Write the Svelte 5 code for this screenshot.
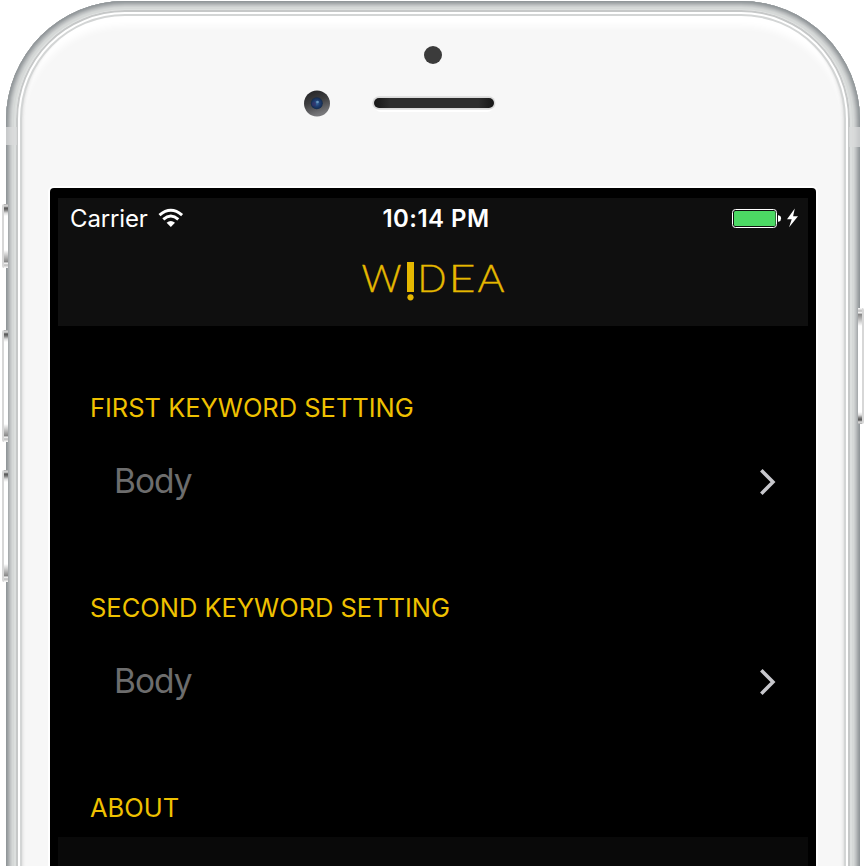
<script>
  const sections = [
    { title: 'FIRST KEYWORD SETTING', value: 'Body' },
    { title: 'SECOND KEYWORD SETTING', value: 'Body' }
  ];
  const buttons = ['mute', 'up', 'down', 'power'];
</script>

<div class="stage">
  {#each buttons as name}
    <span class="button {name}"></span>
  {/each}
  <div class="phone">
    <span class="band left"></span>
    <span class="band right"></span>
    <div class="face">
      <div class="sensors">
        <svg width="220" height="90" viewBox="290 40 220 90">
          <defs>
            <linearGradient id="ring" x1="0" y1="0" x2=".35" y2="1">
              <stop offset="0" stop-color="#202022" />
              <stop offset=".5" stop-color="#3d3d3f" />
              <stop offset="1" stop-color="#77777a" />
            </linearGradient>
            <radialGradient id="lens">
              <stop offset="0" stop-color="#376b9e" />
              <stop offset=".5" stop-color="#203f74" />
              <stop offset="1" stop-color="#142a4a" />
            </radialGradient>
            <linearGradient id="slot">
              <stop offset="0" stop-color="#171717" />
              <stop offset=".13" stop-color="#2d2d2d" />
              <stop offset=".87" stop-color="#2d2d2d" />
              <stop offset="1" stop-color="#171717" />
            </linearGradient>
          </defs>
          <circle cx="433" cy="55" r="9" fill="#3b3b3b" />
          <circle cx="317" cy="103.5" r="13" fill="url(#ring)" />
          <circle cx="316.8" cy="103.3" r="6" fill="url(#lens)" />
          <circle cx="314" cy="104" r="2.2" fill="#36336b" opacity=".7" />
          <circle cx="317.5" cy="102" r="1.3" fill="#6996bd" />
          <rect x="374" y="98" width="120" height="14" rx="7" fill="#fff" />
          <rect x="372.3" y="96.2" width="123.200" height="13.600" rx="6.800" fill="#dadada" />
          <rect x="374" y="98" width="120" height="10" rx="5" fill="url(#slot)" />
        </svg>
      </div>
      <div class="screen">
        <header>
          <div class="status">
            <div class="carrier">
              <span>Carrier</span>
              <svg width="26" height="20" viewBox="0 0 26 20" fill="none" stroke="#fff" stroke-width="3">
                <path d="M1.500 7.200 Q12.800-2.600 24.100 7.200" />
                <path d="M5.300 11.300 Q12.800 4.700 20.300 11.300" />
                <path d="M8.600 14.800 Q12.800 11 17 14.800 L12.800 19Z" fill="#fff" stroke="none" />
              </svg>
            </div>
            <span class="time">10:14 PM</span>
            <svg class="power-icons" width="68" height="22" viewBox="732 207 68 22">
              <rect x="732.500" y="209.500" width="44" height="18" rx="3" fill="none" stroke="#fff" />
              <rect x="734" y="211" width="41.500" height="15" rx="1.500" fill="#4cd964" />
              <path d="M778 215.200h.5q2.600.5 2.600 3.300t-2.600 3.300h-.5z" fill="#fff" />
              <path d="M794.800 208.500 L787 219.200 H791.700 L789.100 227.300 L798 216.300 H793.100Z" fill="#fff" />
            </svg>
          </div>
          <svg class="logo" width="166" height="62" viewBox="350 250 166 62">
            <g font-family="Lato, sans-serif" font-weight="300" font-size="37.500" fill="#e5b800" stroke="#e5b800" stroke-width=".35">
              <text x="361.500" y="292" textLength="40" lengthAdjust="spacingAndGlyphs">W</text>
              <text x="417.500" y="292" textLength="29" lengthAdjust="spacingAndGlyphs">D</text>
              <text x="448.500" y="292" textLength="27" lengthAdjust="spacingAndGlyphs">E</text>
              <text x="477.500" y="292" textLength="27" lengthAdjust="spacingAndGlyphs">A</text>
            </g>
            <rect x="407" y="262" width="7" height="30" fill="#e5b800" />
            <circle cx="410.500" cy="297.300" r="3.100" fill="#e5b800" />
          </svg>
        </header>
        <main>
          {#each sections as section}
            <section>
              <h2>{section.title}</h2>
              <div class="row">
                <span>{section.value}</span>
                <svg width="18" height="28" viewBox="0 0 18 28" fill="none" stroke="#c7c7cc" stroke-width="3.500">
                  <path d="M2.300 2.200 14 14 2.300 25.800" />
                </svg>
              </div>
            </section>
          {/each}
          <section class="about">
            <h2>ABOUT</h2>
            <div class="panel"></div>
          </section>
        </main>
      </div>
    </div>
  </div>
</div>

<style>
  :global(body) { margin: 0; background: #fff; }
  .stage {
    position: relative;
    box-sizing: border-box;
    width: 864px;
    height: 866px;
    padding: 1px 4px 0 6px;
    overflow: hidden;
    font-family: Inter, sans-serif;
  }
  .phone {
    position: relative;
    box-sizing: border-box;
    width: 854px;
    height: 1100px;
    padding: 9px 10px;
    border-radius: 119px;
    background: #dcdfde;
    box-shadow:
      inset 0 0 0 1px #92979a, inset 0 0 0 2px #9ca1a3,
      inset 0 0 0 3px #a8acae, inset 0 0 0 4px #b6b9ba,
      inset 0 0 0 5px #c2c5c6, inset 0 0 0 6px #cccfcf,
      inset 0 0 0 8px #d5d8d7;
  }
  .face {
    box-sizing: border-box;
    width: 834px;
    height: 1082px;
    padding: 30px 34px 0;
    border-radius: 109px;
    background: #f7f7f7;
    box-shadow:
      inset 0 0 0 2px #c6c8c8, inset 0 0 0 4px #fff,
      inset 0 0 0 6px #d3d5d5, inset 7px 0 3px #dcdcdc,
      inset -7px 0 3px #dcdcdc, inset 0 13px 7px 3px #fff;
  }
  .band { position: absolute; z-index: 1; top: 126px; width: 11px; height: 18px; background: #d9dbdb; opacity: .75; }
  .band.left { left: 0; }
  .band.right { right: 0; height: 20px; }
  .button {
    position: absolute;
    left: 2px;
    width: 6px;
    z-index: 1;
    border-radius: 2px 0 0 2px;
    background:
      linear-gradient(90deg, #d7d7d7 0 2px, transparent 2px),
      linear-gradient(#aaa 0, #ddd 2px, #555 4px, #777 6px, #ddd 9px, #fff 12px, #fff calc(100% - 18px), #858585 calc(100% - 6px), #fff calc(100% - 5px), #bbb calc(100% - 3px), #fff 100%);
  }
  .mute { top: 204px; height: 64px; }
  .up { top: 330px; height: 112px; }
  .down { top: 470px; height: 112px; }
  .power { top: 308px; left: auto; right: 0; height: 116px; transform: scale(-1, -1); }

  .sensors { height: 148px; padding-left: 240px; }
  .sensors svg { display: block; }
  .screen {
    box-sizing: border-box;
    width: 766px;
    height: 820px;
    padding: 10px 8px;
    border-radius: 4px;
    background: #000;
    box-shadow: 0 0 0 2px #fff;
  }
  header { height: 128px; background: #0f0f0f; }
  .status {
    display: grid;
    grid-template-columns: 1fr auto 1fr;
    align-items: center;
    height: 40px;
    padding: 0 8px 0 12px;
    color: #fff;
    font-size: 24px;
  }
  .carrier { display: flex; align-items: center; gap: 10px; letter-spacing: -.15px; }
  .time { padding-left: 2px; font-weight: 600; font-size: 24px; letter-spacing: .45px; }
  .power-icons { justify-self: end; }
  .logo { display: block; margin: 12px auto 0 292px; }
  main { padding-top: 64px; }
  section { height: 200px; }
  h2 {
    margin: 0 0 0 32px;
    color: #efc100;
    font-size: 25.500px;
    font-weight: 400;
    line-height: 36px;
    letter-spacing: -.03px;
  }
  .row {
    display: flex;
    align-items: center;
    justify-content: space-between;
    height: 60px;
    margin-top: 26px;
    padding: 0 31px 0 56px;
    color: #6d6d6d;
    font-size: 33.500px;
    letter-spacing: -1px;
  }
  .row span { margin-top: -2px; }
  .panel { height: 60px; margin-top: 11px; background: #090909; }
</style>
